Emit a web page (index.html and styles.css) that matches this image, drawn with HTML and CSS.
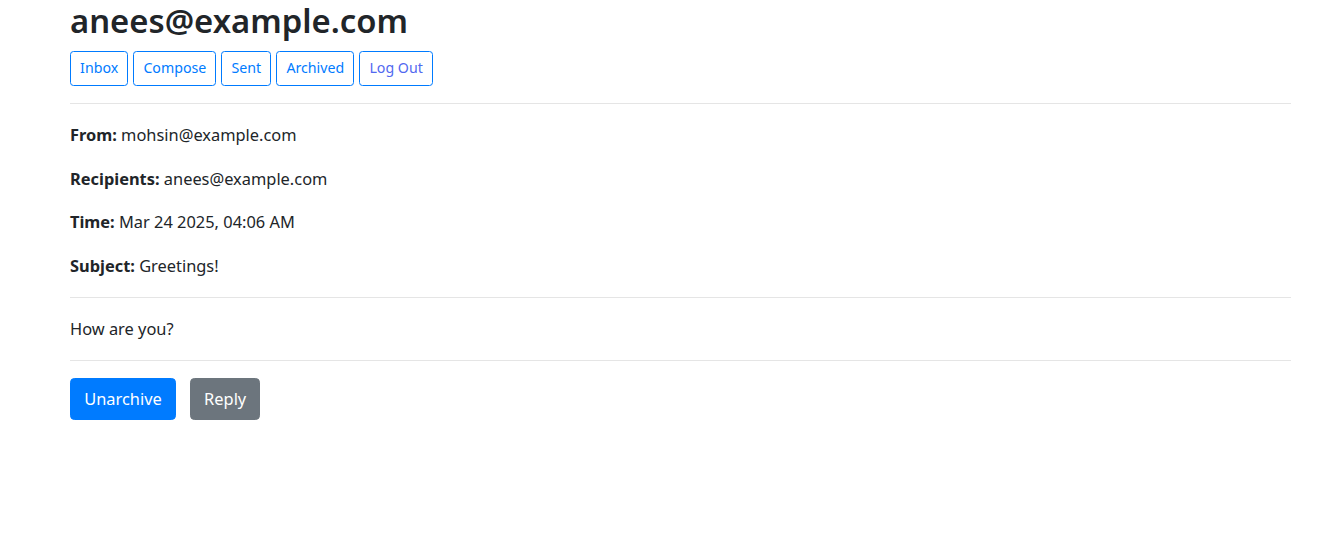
FILE: index.html
```html
<!DOCTYPE html>
<html lang="en">
<head>
    <meta charset="UTF-8">
    <title>Mail</title>
    <link rel="stylesheet" href="styles.css">
</head>
<body>
    <div class="container">
        <h2>anees@example.com</h2>
        <div class="nav-buttons">
            <button class="btn-sm">Inbox</button>
            <button class="btn-sm">Compose</button>
            <button class="btn-sm">Sent</button>
            <button class="btn-sm">Archived</button>
            <a class="btn-sm logout" href="#">Log Out</a>
        </div>
        <hr>
        <div id="email-view">
            <p><b>From:</b> mohsin@example.com</p>
            <p><b>Recipients:</b> anees@example.com</p>
            <p><b>Time:</b> Mar 24 2025, 04:06 AM</p>
            <p><b>Subject:</b> Greetings!</p>
            <hr>
            <p class="email-body">How are you?</p>
            <hr>
            <div class="actions">
                <button class="btn btn-primary">Unarchive</button>
                <button class="btn btn-secondary">Reply</button>
            </div>
        </div>
    </div>
</body>
</html>
```

FILE: styles.css
```css
body {
    margin: 0;
    font-family: "Noto Sans", "Open Sans", sans-serif;
    font-size: 16.4px;
    line-height: 26.4px;
    color: #212529;
    background: #fff;
}
.container {
    padding: 0 48px 0 70px;
}
h2 {
    margin: 0 0 8.8px;
    font-size: 32.8px;
    font-weight: 600;
    line-height: 42.2px;
}
.nav-buttons {
    display: flex;
    gap: 5px;
}
.btn-sm {
    display: inline-block;
    font-family: inherit;
    font-size: 14.2px;
    line-height: 23.8px;
    padding: 4.4px 9.1px;
    border: 1px solid #007bff;
    border-radius: 3.5px;
    background: #fff;
    color: #007bff;
    text-decoration: none;
}
.logout {
    color: #5168f0;
}
hr {
    margin: 17.6px 0;
    border: 0;
    border-top: 1px solid rgba(0, 0, 0, 0.1);
}
p {
    margin: 0 0 17.4px;
}
.email-body {
    margin: 0;
}
.actions {
    display: flex;
    gap: 14px;
}
.btn {
    font-family: inherit;
    font-size: 16.4px;
    line-height: 26.4px;
    padding: 6.6px 13.2px;
    border: 1px solid transparent;
    border-radius: 4.4px;
    color: #fff;
}
.btn-primary {
    background: #007bff;
    border-color: #007bff;
}
.btn-secondary {
    background: #6c757d;
    border-color: #6c757d;
}
```
